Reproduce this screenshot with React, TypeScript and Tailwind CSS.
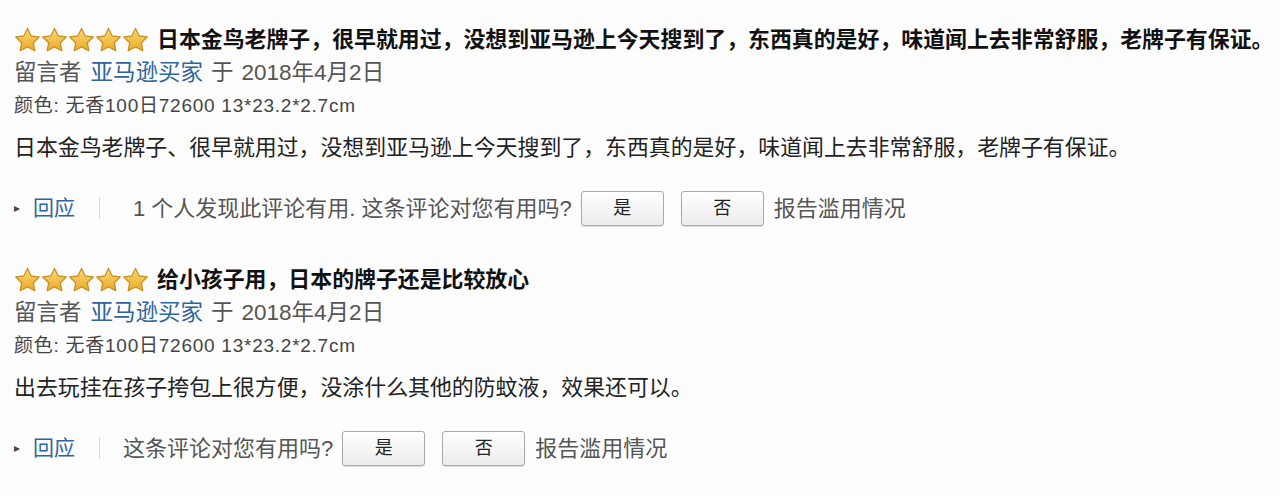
import React from 'react';

const FONT = { fontFamily: '"Liberation Sans", "Noto Sans CJK SC", sans-serif' };

interface Review {
  title: string;
  body: string;
  helpful?: string;
}

const reviews: Review[] = [
  {
    title: '日本金鸟老牌子，很早就用过，没想到亚马逊上今天搜到了，东西真的是好，味道闻上去非常舒服，老牌子有保证。',
    body: '日本金鸟老牌子、很早就用过，没想到亚马逊上今天搜到了，东西真的是好，味道闻上去非常舒服，老牌子有保证。',
    helpful: '1 个人发现此评论有用. ',
  },
  {
    title: '给小孩子用，日本的牌子还是比较放心',
    body: '出去玩挂在孩子挎包上很方便，没涂什么其他的防蚊液，效果还可以。',
  },
];

function Star() {
  return (
    <svg width="27" height="26" viewBox="0 0 24 23" className="shrink-0">
      <defs>
        <linearGradient id="starFill" x1="0" y1="0" x2="0" y2="1">
          <stop offset="0%" stopColor="#fbd975" />
          <stop offset="100%" stopColor="#e9a92a" />
        </linearGradient>
      </defs>
      <path
        d="M12 1.2l3.2 6.6 7.2 1-5.2 5.1 1.3 7.2L12 17.7l-6.5 3.4 1.3-7.2L1.6 8.8l7.2-1z"
        fill="url(#starFill)"
        stroke="#c98d1e"
        strokeWidth="1.1"
        strokeLinejoin="round"
      />
    </svg>
  );
}

function VoteButton({ label }: { label: string }) {
  return (
    <button className="flex h-[35px] w-[83px] items-center justify-center rounded-[3px] border border-[#a9a9a9] bg-gradient-to-b from-white to-[#ececec] text-[18px] text-[#222] shadow-[0_1px_1px_rgba(0,0,0,0.12)]">
      {label}
    </button>
  );
}

function ReviewItem({ review }: { review: Review }) {
  return (
    <div className="flex flex-col">
      <div className="flex h-[32px] items-center">
        <div className="flex w-[134px] items-center">
          {[0, 1, 2, 3, 4].map(i => (
            <Star key={i} />
          ))}
        </div>
        <span className="ml-[9px] text-[21.9px] font-bold text-[#111]">{review.title}</span>
      </div>
      <div className="mt-[1px] flex h-[32px] items-center text-[22.5px] text-[#555]">
        <span>留言者</span>
        <span className="ml-[9px] text-[#2f66a0]">亚马逊买家</span>
        <span className="ml-[8px]">于</span>
        <span className="ml-[8px]">2018年4月2日</span>
      </div>
      <div className="mt-[1px] flex h-[32px] items-center text-[19px] tracking-[0.75px] text-[#444]">
        颜色: 无香100日72600 13*23.2*2.7cm
      </div>
      <div className="mt-[10px] flex h-[32px] items-center text-[21.9px] text-[#222]">{review.body}</div>
      <div className="mt-[24px] flex h-[40px] items-center text-[22px] text-[#555]">
        <span className="text-[12px] text-[#444]">▸</span>
        <span className="ml-[13px] text-[21px] text-[#2f66a0]">回应</span>
        <span className="ml-[24px] h-[22px] w-px bg-[#d8d8d8]" />
        <span className={review.helpful ? 'ml-[33px]' : 'ml-[23px]'}>
          {review.helpful}这条评论对您有用吗?
        </span>
        <span className="ml-[9px]">
          <VoteButton label="是" />
        </span>
        <span className="ml-[17px]">
          <VoteButton label="否" />
        </span>
        <span className="ml-[10px]">报告滥用情况</span>
      </div>
    </div>
  );
}

export default function App() {
  return (
    <div className="h-[496px] w-[1280px] overflow-hidden bg-[#fdfdfd] pl-[14px] pt-[24px]" style={FONT}>
      <div className="flex flex-col gap-[36px]">
        {reviews.map((r, i) => (
          <ReviewItem key={i} review={r} />
        ))}
      </div>
    </div>
  );
}
